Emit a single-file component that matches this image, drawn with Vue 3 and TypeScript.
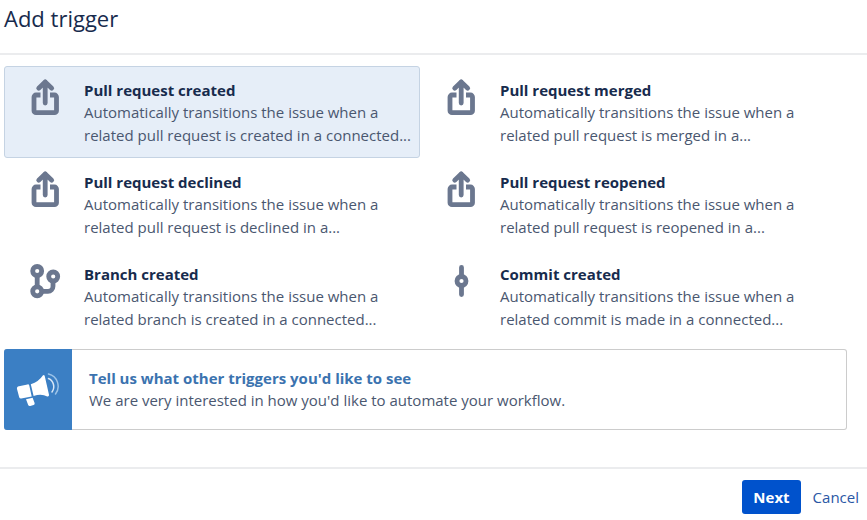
<script setup lang="ts">
import { ref } from 'vue'

type IconName = 'share' | 'branch' | 'commit'

interface Trigger {
  id: string
  icon: IconName
  title: string
  description: string
}

const triggers: Trigger[] = [
  { id: 'pr-created', icon: 'share', title: 'Pull request created', description: 'Automatically transitions the issue when a related pull request is created in a connected...' },
  { id: 'pr-merged', icon: 'share', title: 'Pull request merged', description: 'Automatically transitions the issue when a related pull request is merged in a...' },
  { id: 'pr-declined', icon: 'share', title: 'Pull request declined', description: 'Automatically transitions the issue when a related pull request is declined in a...' },
  { id: 'pr-reopened', icon: 'share', title: 'Pull request reopened', description: 'Automatically transitions the issue when a related pull request is reopened in a...' },
  { id: 'branch-created', icon: 'branch', title: 'Branch created', description: 'Automatically transitions the issue when a related branch is created in a connected...' },
  { id: 'commit-created', icon: 'commit', title: 'Commit created', description: 'Automatically transitions the issue when a related commit is made in a connected...' },
]

const selected = ref<string>('pr-created')
</script>

<template>
  <section class="dialog" aria-labelledby="dialog-title">
    <header class="dialog-header">
      <h1 id="dialog-title">Add trigger</h1>
    </header>

    <main class="dialog-body">
      <div class="triggers">
        <button
          v-for="trigger in triggers"
          :key="trigger.id"
          type="button"
          class="trigger"
          :class="{ selected: selected === trigger.id }"
          :aria-pressed="selected === trigger.id"
          @click="selected = trigger.id"
        >
          <svg class="trigger-icon" viewBox="0 0 32 38" aria-hidden="true">
            <g v-if="trigger.icon === 'share'" fill="none" stroke="currentColor" stroke-width="4.8">
              <path d="M11.500 16H7a2 2 0 0 0-2 2V31.700a2 2 0 0 0 2 2h18.500a2 2 0 0 0 2-2V18a2 2 0 0 0-2-2H21" />
              <path d="M16.200 24V3M9.700 9.200 16.200 2.900l6.500 6.300" stroke-linecap="round" stroke-linejoin="round" />
            </g>
            <g v-else-if="trigger.icon === 'branch'" fill="none" stroke="currentColor" stroke-width="4.800">
              <circle cx="8.200" cy="8" r="4.500" />
              <circle cx="8.200" cy="28.300" r="4.500" />
              <circle cx="24.200" cy="13.500" r="4.500" />
              <path d="M8.200 12v12M13 28.300h6a5 5 0 0 0 5-5v-5" />
            </g>
            <g v-else fill="none" stroke="currentColor" stroke-width="4.800">
              <circle cx="16.500" cy="18" r="4.500" />
              <path d="M16.500 4.500V12M16.500 24v7.500" stroke-linecap="round" />
            </g>
          </svg>
          <span class="trigger-text">
            <strong>{{ trigger.title }}</strong>
            <span class="description">{{ trigger.description }}</span>
          </span>
        </button>
      </div>

      <aside class="feedback">
        <div class="feedback-icon">
          <svg viewBox="0 0 44 36" aria-hidden="true">
            <g fill="#fff">
              <path d="M3 14.300 11.500 12.400q1.500-.2 1.800 1l2.400 11-10.500 2.200q-1.500.2-2-1.400L1 17q-.5-2.200 2-2.700z" />
              <path d="M14.800 12.200Q23 9.500 26.800 3.500q1.300-1.400 2 .8l4.200 18.500q.3 2-1.700 1.700Q25.500 21.500 17.600 24z" />
              <path d="m10 27.300 6.600-1.500 2 5.200q.5 1.500-1 2l-3.400 1q-1.500.3-2-1z" />
            </g>
            <g fill="none" stroke-linecap="round">
              <path d="M32.500 6.500C37.500 8.500 39.500 15.500 36 20" stroke="#d9e8f7" stroke-width="1.500" />
              <path d="M32.500 2C41.500 4 45 15 39.500 22" stroke="#9cc3e8" stroke-width="1.500" />
            </g>
          </svg>
        </div>
        <div class="feedback-text">
          <a href="#feedback">Tell us what other triggers you'd like to see</a>
          <p>We are very interested in how you'd like to automate your workflow.</p>
        </div>
      </aside>
    </main>

    <footer class="dialog-footer">
      <button type="button" class="next">Next</button>
      <button type="button" class="cancel">Cancel</button>
    </footer>
  </section>
</template>

<style>
body {
  margin: 0;
  background: #fff;
}
</style>

<style scoped>
.dialog {
  font-family: 'Open Sans', 'Noto Sans', sans-serif;
  font-size: 15px;
  line-height: 23px;
  font-weight: 400;
  color: #4a5770;
}

.dialog-header {
  padding: 3px 4px 20px;
  border-bottom: 2px solid #ebecee;
}

h1 {
  margin: 0;
  font-size: 22px;
  line-height: 30px;
  font-weight: 400;
  color: #172b4d;
}

.dialog-body {
  padding: 11px 20px 37px 4px;
}

.triggers {
  display: grid;
  grid-template-columns: 1fr 1fr;
  padding-right: 11px;
}

.trigger {
  display: flex;
  align-items: flex-start;
  gap: 23px;
  padding: 12px 4px 10px 24px;
  border: 1px solid transparent;
  border-radius: 3px;
  background: none;
  color: inherit;
  font: inherit;
  text-align: left;
  cursor: pointer;
}

.trigger.selected {
  background: #e6eef8;
  border-color: #c5d3e3;
}

.trigger-icon {
  flex: none;
  width: 32px;
  height: 38px;
  color: #6b778f;
  overflow: visible;
}

.trigger-text {
  flex: 1;
  min-width: 0;
}

.trigger-text strong {
  display: block;
  line-height: 22px;
  font-weight: 700;
  color: #172b4d;
}

.description {
  display: block;
}

.feedback {
  display: flex;
  margin-top: 7px;
  border: 1px solid #ccc;
  border-left: 0;
  border-radius: 3px;
}

.feedback-icon {
  display: flex;
  align-items: center;
  justify-content: center;
  width: 68px;
  margin: -1px 0;
  border-radius: 3px 0 0 3px;
  background: #3b7fc4;
}

.feedback-icon svg {
  width: 44px;
  height: 36px;
}

.feedback-text {
  padding: 17px;
}

.feedback-text a {
  display: block;
  line-height: 22px;
  font-weight: 700;
  color: #3b73af;
  text-decoration: none;
}

.feedback-text p {
  margin: 0;
}

.dialog-footer {
  display: flex;
  justify-content: flex-end;
  gap: 12px;
  padding: 11px 8px 0;
  border-top: 2px solid #ebecee;
}

.dialog-footer button {
  height: 34px;
  border: 0;
  font: inherit;
  cursor: pointer;
}

.dialog-footer .next {
  padding: 0 11px;
  border-radius: 3px;
  background: #0052cc;
  color: #fff;
  font-weight: 700;
}

.dialog-footer .cancel {
  padding: 0;
  background: none;
  color: #2a57a5;
}
</style>
